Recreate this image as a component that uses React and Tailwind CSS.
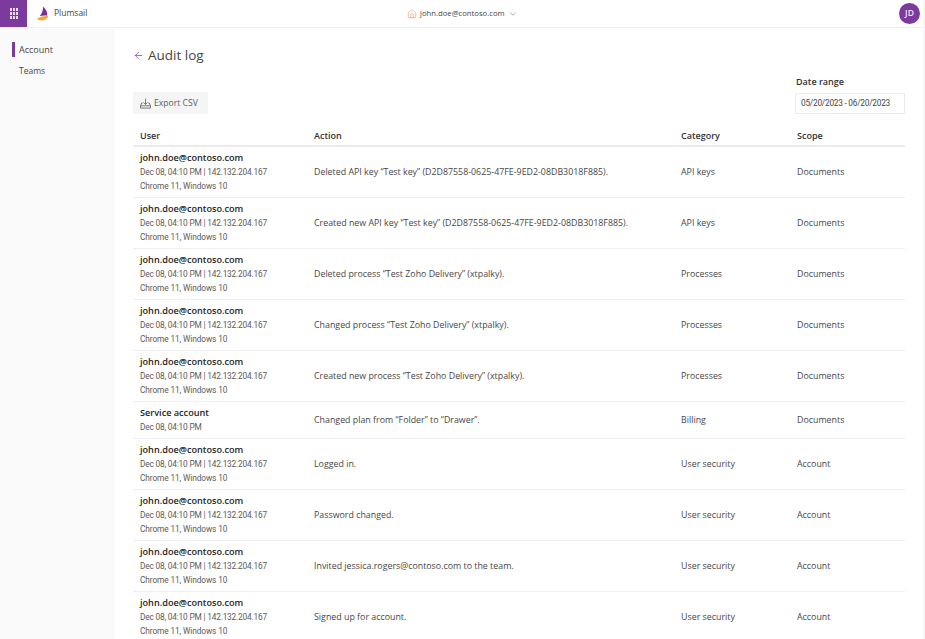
import React from 'react';
import { ArrowLeft, ChevronDown, House } from 'lucide-react';

const rows = [
  { action: 'Deleted API key “Test key” (D2D87558-0625-47FE-9ED2-08DB3018F885).', category: 'API keys', scope: 'Documents' },
  { action: 'Created new API key “Test key” (D2D87558-0625-47FE-9ED2-08DB3018F885).', category: 'API keys', scope: 'Documents' },
  { action: 'Deleted process “Test Zoho Delivery” (xtpalky).', category: 'Processes', scope: 'Documents' },
  { action: 'Changed process “Test Zoho Delivery” (xtpalky).', category: 'Processes', scope: 'Documents' },
  { action: 'Created new process “Test Zoho Delivery” (xtpalky).', category: 'Processes', scope: 'Documents' },
  { service: true, action: 'Changed plan from “Folder” to “Drawer”.', category: 'Billing', scope: 'Documents' },
  { action: 'Logged in.', category: 'User security', scope: 'Account' },
  { action: 'Password changed.', category: 'User security', scope: 'Account' },
  { action: 'Invited jessica.rogers@contoso.com to the team.', category: 'User security', scope: 'Account' },
  { action: 'Signed up for account.', category: 'User security', scope: 'Account' },
];

const Logo = () => (
  <svg width="13" height="15" viewBox="0 0 15 17" fill="none">
    <path d="M8 0.5 C12 4 13.5 8 13 11 C10 10.5 7 10.8 4.5 11.5 C7 8 8.5 4.5 8 0.5 Z" fill="#7b2d9b" />
    <path d="M1 15 C4 12 9 11 14 11.5 C13.5 14.5 10.5 16.8 7 16.5 C4.5 16.3 2.5 15.8 1 15 Z" fill="#f2a63b" />
  </svg>
);

const ExportIcon = () => (
  <svg width="11" height="11" viewBox="0 0 12 12" fill="none" stroke="#605e5c" strokeWidth="0.9">
    <path d="M6 0.8 V7 M3.8 4.8 L6 7 L8.2 4.8" />
    <path d="M3 5.5 H1.8 L0.6 8.5 V11 H11.4 V8.5 L10.2 5.5 H9 M0.6 8.5 H11.4" />
  </svg>
);

const Row = ({ row }) => (
  <div className="grid grid-cols-[174px_367px_116px_1fr] items-center pl-[7px] border-b border-[#f0f0f0]">
    <div className="py-[4px]">
      <div className="text-[9.15px] leading-[14px] font-semibold text-[#252423]">
        {row.service ? 'Service account' : 'john.doe@contoso.com'}
      </div>
      <div className="font-['Roboto',sans-serif] text-[8.3px] tracking-[-0.18px] leading-[14px] text-[#5c5a58]">
        {row.service ? 'Dec 08, 04:10 PM' : 'Dec 08, 04:10 PM | 142.132.204.167'}
      </div>
      {!row.service && (
        <div className="font-['Roboto',sans-serif] text-[8.3px] tracking-[-0.1px] leading-[14px] text-[#5c5a58]">Chrome 11, Windows 10</div>
      )}
    </div>
    <div className="pt-[1px] text-[8.85px] text-[#484644]">{row.action}</div>
    <div className="pt-[1px] text-[8.85px] text-[#484644]">{row.category}</div>
    <div className="pt-[1px] text-[8.85px] text-[#484644]">{row.scope}</div>
  </div>
);

export default function App() {
  return (
    <div className="w-[925px] h-[639px] overflow-hidden bg-white flex flex-col border-r-2 border-[#f6f6f6] font-['Open_Sans',sans-serif]">
      <header className="h-[28px] shrink-0 flex items-center border-b border-[#f0f0f0] relative">
        <div className="w-[27px] h-[27px] bg-[#7d3a9e] flex items-center justify-center">
          <div className="grid grid-cols-[repeat(3,2px)] grid-rows-[repeat(3,3px)] gap-[1px]">
            {Array.from({ length: 9 }).map((_, i) => (
              <span key={i} className="bg-[#ead9f2]" />
            ))}
          </div>
        </div>
        <div className="ml-[9px] flex items-center gap-[5px]">
          <Logo />
          <span className="text-[8.5px] text-[#484644]">Plumsail</span>
        </div>
        <div className="absolute left-[407px] top-0 h-[27px] flex items-center gap-[3px]">
          <House size={10} strokeWidth={1.5} className="text-[#e8956a]" />
          <span className="text-[7.7px] text-[#484644]">john.doe@contoso.com</span>
          <ChevronDown size={10} strokeWidth={1.25} className="text-[#605e5c]" />
        </div>
        <div className="absolute left-[899px] top-[3px] w-[21px] h-[21px] rounded-full bg-[#7d3a9e] flex items-center justify-center text-[8.5px] font-semibold text-[#f0e4f6]">
          JD
        </div>
      </header>
      <div className="flex flex-1 min-h-0">
        <aside className="w-[115px] shrink-0 bg-[#fafafa] pt-[14px]">
          <div className="relative h-[15px] pl-[19px] flex items-center text-[9px] text-[#484644]">
            <span className="absolute left-[12px] top-0 w-[3px] h-[15px] bg-[#7d3a9e]" />
            Account
          </div>
          <div className="h-[15px] mt-[7px] pl-[19px] flex items-center text-[8.5px] text-[#484644]">Teams</div>
        </aside>
        <main className="flex-1 min-w-0 pl-[18px] pr-[18px]">
          <div className="flex items-center h-[20px] mt-[17px]">
            <ArrowLeft size={11} strokeWidth={1.75} className="text-[#8f4bb0]" />
            <h1 className="ml-[4px] text-[13.5px] leading-[20px] text-[#484644]">Audit log</h1>
          </div>
          <div className="flex justify-between items-end h-[33px] mt-[16px]">
            <button className="w-[75px] h-[22px] bg-[#f5f5f5] flex items-center pl-[7px] gap-[3px] text-[8.6px] text-[#605e5c]">
              <ExportIcon />
              Export CSV
            </button>
            <div className="w-[110px]">
              <div className="pl-[1px] text-[9px] leading-[13px] font-semibold text-[#323130]">Date range</div>
              <div className="mt-[5px] h-[21px] flex items-center pl-[5px] border border-[#ececec] font-['Roboto',sans-serif] text-[8.3px] tracking-[-0.25px] text-[#484644]">
                05/20/2023 - 06/20/2023
              </div>
            </div>
          </div>
          <div className="grid grid-cols-[174px_367px_116px_1fr] items-center pl-[7px] h-[20px] mt-[13px] border-b-2 border-[#ebebeb] text-[9px] font-semibold text-[#323130]">
            <div>User</div>
            <div>Action</div>
            <div>Category</div>
            <div>Scope</div>
          </div>
          {rows.map((row, i) => (
            <Row key={i} row={row} />
          ))}
        </main>
      </div>
    </div>
  );
}
